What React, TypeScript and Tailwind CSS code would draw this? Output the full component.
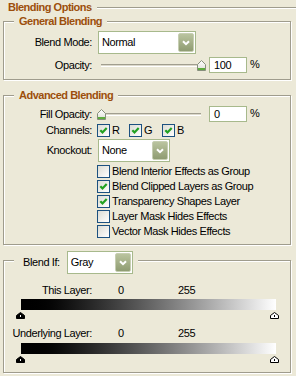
import type { ReactNode } from 'react';

const options: { label: string; on: boolean }[] = [
  { label: 'Blend Interior Effects as Group', on: false },
  { label: 'Blend Clipped Layers as Group', on: true },
  { label: 'Transparency Shapes Layer', on: true },
  { label: 'Layer Mask Hides Effects', on: false },
  { label: 'Vector Mask Hides Effects', on: false },
];

const Chevron = () => (
  <svg width="8" height="6" viewBox="0 0 8 6">
    <path d="M1 1.2L4 4.2L7 1.2" fill="none" stroke="#fff" strokeWidth="2" />
  </svg>
);

const Select = ({ value, className }: { value: string; className: string }) => (
  <div
    className={`flex h-[23px] items-center border border-[#a7b98c] bg-white pr-[1px] pl-[3px] ${className}`}
  >
    <span className="flex-1">{value}</span>
    <span className="flex h-[19px] w-[16px] items-center justify-center rounded-[2px] border border-[#c6ceb2] bg-linear-to-b from-[#bac49f] to-[#8f9c72]">
      <Chevron />
    </span>
  </div>
);

const Field = ({ value }: { value: string }) => (
  <div className="flex h-[16px] w-[38px] items-center border border-[#a7b98c] bg-white pl-[4px]">
    {value}
  </div>
);

const Thumb = () => (
  <svg width="9" height="11" viewBox="0 0 9 11">
    <defs>
      <linearGradient id="thumbFill" x1="0" y1="0" x2="0" y2="1">
        <stop offset="0" stopColor="#ffffff" />
        <stop offset="1" stopColor="#deded6" />
      </linearGradient>
    </defs>
    <path d="M4.5 0.5L8.5 4.5V10.5H0.5V4.5Z" fill="url(#thumbFill)" stroke="#868f7c" />
    <rect x="1" y="8" width="7" height="2" fill="#5eac3d" />
  </svg>
);

const Slider = ({ full }: { full: boolean }) => (
  <div className="relative h-[16px] w-[109px]">
    <div className="absolute top-[7px] right-[5px] left-[4px] h-[3px] border-t border-b border-t-[#a19e8f] border-b-white bg-[#dcd9cb]" />
    <div className={`absolute top-[3px] flex ${full ? 'left-[100px]' : 'left-0'}`}>
      <Thumb />
    </div>
  </div>
);

const Check = ({ on }: { on: boolean }) => (
  <span className="flex h-[13px] w-[13px] shrink-0 items-center justify-center border border-[#1c5180] bg-linear-to-br from-[#dcdcd4] to-white">
    {on && (
      <svg width="11" height="11" viewBox="0 0 11 11">
        <path d="M2.3 5.2L4.5 7.4L8.7 3" fill="none" stroke="#21a121" strokeWidth="2.2" />
      </svg>
    )}
  </span>
);

const Stop = ({ dark }: { dark: boolean }) => (
  <svg width="9" height="7" viewBox="0 0 9 7">
    <path d="M4.5 0.5L8.5 3.5V6.5H0.5V3.5Z" fill={dark ? '#000' : '#fff'} stroke="#000" />
    <rect x="4" y="3" width="1" height="2" fill={dark ? '#fff' : '#000'} />
  </svg>
);

const Group = ({
  legend,
  className,
  children,
}: {
  legend: ReactNode;
  className: string;
  children: ReactNode;
}) => (
  <fieldset
    className={`mx-[3px] w-[288px] border border-[#9f9c8d] shadow-[inset_1px_1px_0_#fff,1px_1px_0_#fff] ${className}`}
  >
    {legend}
    {children}
  </fieldset>
);

const Title = ({ text }: { text: string }) => (
  <legend className="ml-[10px] bg-[#ece9d8] px-[5px] leading-[13px] font-bold tracking-[-0.5px] text-[#9c4f0c]">
    {text}
  </legend>
);

const Label = ({ text }: { text: string }) => (
  <span className="w-[88px] shrink-0 text-right">{text}</span>
);

const Range = ({ label }: { label: string }) => (
  <div className="flex h-[13px] items-center">
    <Label text={label} />
    <span className="w-[86px] pl-[26px]">0</span>
    <span>255</span>
  </div>
);

export default function App() {
  return (
    <div className="h-[376px] w-[296px] overflow-hidden bg-[#ece9d8] font-['Liberation_Sans',Arial,sans-serif] text-[11px] leading-[13px] tracking-[-0.4px] text-black">
      <div className="flex h-[15px] items-center pl-[8px]">
        <span className="font-bold tracking-[-0.5px] text-[#9c4f0c]">Blending Options</span>
        <span className="ml-[5px] h-[2px] flex-1 border-t border-b border-t-[#9f9c8d] border-b-white" />
      </div>

      <Group legend={<Title text="General Blending" />} className="">
        <div className="flex flex-col pt-[3px] pb-[6px]">
          <div className="flex items-center">
            <Label text="Blend Mode:" />
            <Select value="Normal" className="ml-[6px] w-[98px]" />
          </div>
          <div className="mt-[3px] flex h-[16px] items-center">
            <Label text="Opacity:" />
            <div className="ml-[5px]">
              <Slider full />
            </div>
            <div className="ml-[3px]">
              <Field value="100" />
            </div>
            <span className="ml-[3px] -translate-y-[1px]">%</span>
          </div>
        </div>
      </Group>

      <Group legend={<Title text="Advanced Blending" />} className="mt-[9px]">
        <div className="flex flex-col pt-[4px] pb-[6px]">
          <div className="flex h-[16px] items-center">
            <Label text="Fill Opacity:" />
            <div className="ml-[5px]">
              <Slider full={false} />
            </div>
            <div className="ml-[3px]">
              <Field value="0" />
            </div>
            <span className="ml-[3px] -translate-y-[1px]">%</span>
          </div>
          <div className="mt-[2px] flex h-[13px] items-center">
            <Label text="Channels:" />
            <div className="ml-[5px] flex items-center">
              <span className="flex w-[32px] items-center gap-[2px]">
                <Check on />R
              </span>
              <span className="flex w-[33px] items-center gap-[2px]">
                <Check on />G
              </span>
              <span className="flex items-center gap-[2px]">
                <Check on />B
              </span>
            </div>
          </div>
          <div className="mt-[2px] flex items-center">
            <Label text="Knockout:" />
            <Select value="None" className="ml-[6px] w-[72px]" />
          </div>
          <div className="mt-[3px] flex flex-col gap-[2px] pl-[93px]">
            {options.map((o) => (
              <div key={o.label} className="flex h-[13px] items-center gap-[2px]">
                <Check on={o.on} />
                <span>{o.label}</span>
              </div>
            ))}
          </div>
        </div>
      </Group>

      <Group
        className="mt-[1px]"
        legend={
          <legend className="ml-[10px] bg-[#ece9d8] pt-[5px] pr-[5px] pl-[9px]">
            <div className="flex items-center">
              <span>Blend If:</span>
              <Select value="Gray" className="ml-[7px] w-[66px]" />
            </div>
          </legend>
        }
      >
        <div className="flex flex-col pt-[10px] pb-[9px]">
          <Range label="This Layer:" />
          <div className="mt-[2px] ml-[17px] h-[11px] w-[255px] bg-linear-to-r from-black to-white" />
          <div className="mt-[2px] ml-[12px] flex w-[263px] justify-between">
            <Stop dark />
            <Stop dark={false} />
          </div>
          <div className="mt-[8px]">
            <Range label="Underlying Layer:" />
          </div>
          <div className="mt-[3px] ml-[17px] h-[11px] w-[255px] bg-linear-to-r from-black to-white" />
          <div className="mt-[2px] ml-[12px] flex w-[263px] justify-between">
            <Stop dark />
            <Stop dark={false} />
          </div>
        </div>
      </Group>
    </div>
  );
}
